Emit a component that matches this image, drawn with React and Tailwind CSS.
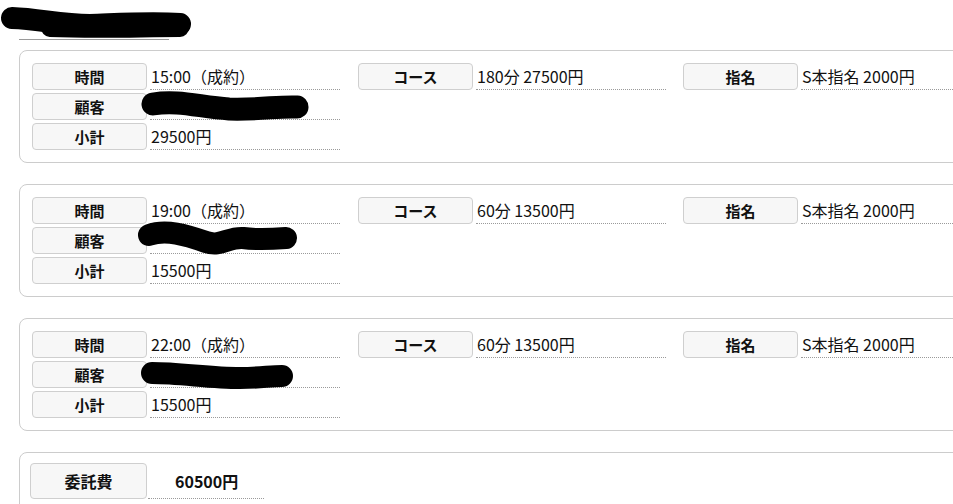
import React from "react";

const font = { fontFamily: '"Noto Sans CJK JP", "Noto Sans", sans-serif' };

function Label({ children }) {
  return (
    <div className="w-[115px] h-[27px] shrink-0 flex items-center justify-center rounded-[4px] border border-[#cfcfcf] bg-[#f7f7f7] text-[15px] font-bold text-[#111] leading-none">
      {children}
    </div>
  );
}

function Value({ children }) {
  return (
    <div className="w-[190px] h-[27px] ml-[3px] pl-[1px] flex items-center border-b border-dotted border-[#9a9a9a] text-[16px] text-[#111] leading-none relative">
      {children}
    </div>
  );
}

function Scribble({ variant }) {
  if (variant === 1) {
    return (
      <svg className="absolute left-[-11px] top-[-4px]" width="172" height="36" viewBox="0 0 172 36">
        <path d="M14 15 C 40 11, 60 18, 90 20 C 120 21, 140 17, 158 18" stroke="#000" strokeWidth="23" fill="none" strokeLinecap="round" />
      </svg>
    );
  }
  if (variant === 2) {
    return (
      <svg className="absolute left-[-14px] top-[-7px]" width="168" height="40" viewBox="0 0 168 40">
        <path d="M13 15 C 30 9, 50 15, 70 22 C 85 27, 92 17, 107 18 C 122 20, 137 19, 150 18" stroke="#000" strokeWidth="22" fill="none" strokeLinecap="round" />
      </svg>
    );
  }
  return (
    <svg className="absolute left-[-12px] top-[-2px]" width="160" height="36" viewBox="0 0 160 36">
      <path d="M14 14 C 42 14, 72 19, 102 19 C 122 19, 132 17, 144 17" stroke="#000" strokeWidth="22" fill="none" strokeLinecap="round" />
    </svg>
  );
}

function Group({ label, value }) {
  return (
    <div className="flex items-center">
      <Label>{label}</Label>
      <Value>{value}</Value>
    </div>
  );
}

function Card({ time, course, customer }) {
  return (
    <div className="ml-[19px] w-[1000px] rounded-[8px] border border-[#cccccc] px-[12px] py-[12px]">
      <div className="grid grid-cols-[326px_325px_326px] gap-y-[3px]">
        <Group label="時間" value={time} />
        <Group label="コース" value={course} />
        <Group label="指名" value="S本指名 2000円" />
        <div className="flex items-center">
          <Label>顧客</Label>
          <Value>
            <Scribble variant={customer} />
          </Value>
        </div>
        <div />
        <div />
        <Group label="小計" value={customer === 1 ? "29500円" : "15500円"} />
        <div />
        <div />
      </div>
    </div>
  );
}

export default function App() {
  return (
    <div className="w-[953px] h-[504px] overflow-hidden bg-white" style={font}>
      <div className="relative ml-[19px] w-[150px] h-[40px] border-b border-[#9a9a9a]">
        <svg className="absolute left-[-19px] top-[4px]" width="200" height="40" viewBox="0 0 200 40">
          <path d="M12 14 C 40 15, 60 21, 90 21 C 120 20, 150 18, 180 20" stroke="#000" strokeWidth="22" fill="none" strokeLinecap="round" />
          <path d="M50 24 C 100 26, 140 24, 180 24" stroke="#000" strokeWidth="18" fill="none" strokeLinecap="round" />
        </svg>
      </div>
      <div className="mt-[10px] flex flex-col gap-[21px]">
        <Card time="15:00（成約）" course="180分 27500円" customer={1} />
        <Card time="19:00（成約）" course="60分 13500円" customer={2} />
        <Card time="22:00（成約）" course="60分 13500円" customer={3} />
        <div className="ml-[19px] w-[1000px] h-[80px] rounded-[8px] border border-[#cccccc] pl-[10px] pt-[10px]">
          <div className="flex items-end">
            <div className="w-[117px] h-[36px] flex items-center justify-center rounded-[4px] border border-[#cfcfcf] bg-[#f7f7f7] text-[16px] font-bold text-[#111] leading-none">
              委託費
            </div>
            <div className="w-[116px] ml-[1px] h-[36px] pl-[27px] flex items-center border-b border-dotted border-[#9a9a9a] text-[16px] font-bold text-[#111] leading-none">
              60500円
            </div>
          </div>
        </div>
      </div>
    </div>
  );
}
